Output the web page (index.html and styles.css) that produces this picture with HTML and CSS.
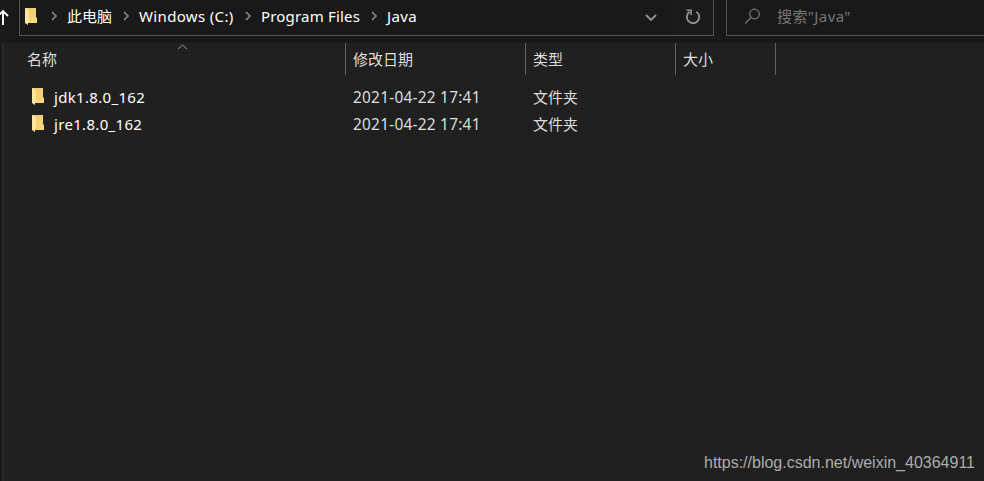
FILE: index.html
```html
<!DOCTYPE html>
<html lang="zh-CN">
<head>
<meta charset="utf-8">
<title>Java</title>
<link rel="stylesheet" href="styles.css">
</head>
<body>
<svg width="0" height="0" class="defs" aria-hidden="true">
  <defs>
    <linearGradient id="gold" x1="0" y1="0" x2="1" y2="1"><stop offset="0" stop-color="#edc868"/><stop offset="1" stop-color="#fbda7c"/></linearGradient>
    <symbol id="folder" viewBox="0 0 13 17"><path d="M0 0h11v9l1 1v5H0z" fill="url(#gold)"/><path d="M0 0l4 2v11l-1 1v3L0 15z" fill="#ffe5a0"/></symbol>
    <symbol id="chevron" viewBox="0 0 6 10"><path d="M1 1l4 4-4 4" fill="none" stroke="#858585" stroke-width="1.7"/></symbol>
  </defs>
</svg>
<header class="toolbar">
  <div class="up"><svg width="9" height="17" viewBox="0 0 9 17"><path d="M3 17V3M-2 8l5-5 5 5" fill="none" stroke="#fff" stroke-width="1.9"/></svg></div>
  <nav class="address">
    <svg class="folder"><use href="#folder"/></svg>
    <svg class="chevron"><use href="#chevron"/></svg><span class="crumb pc">此电脑</span>
    <svg class="chevron"><use href="#chevron"/></svg><span class="crumb drive">Windows (C:)</span>
    <svg class="chevron"><use href="#chevron"/></svg><span class="crumb programs">Program Files</span>
    <svg class="chevron"><use href="#chevron"/></svg><span class="crumb java">Java</span>
    <svg class="drop" width="12" height="8" viewBox="0 0 12 8"><path d="M1 1l5 5 5-5" fill="none" stroke="#919191" stroke-width="1.9"/></svg>
    <div class="refresh"><svg width="16" height="16" viewBox="0 0 16 16"><path d="M11.3 2.7A6.2 6.2 0 1 1 4.5 2.9" fill="none" stroke="#929292" stroke-width="1.9"/><path d="M1.5 1.3h4.6v4.8" fill="none" stroke="#929292" stroke-width="1.6"/></svg></div>
  </nav>
  <div class="search">
    <svg width="17" height="17" viewBox="0 0 17 17"><circle cx="10.5" cy="6" r="4.8" fill="none" stroke="#777" stroke-width="1.2"/><path d="M7 9.5L1 15.6" stroke="#777" stroke-width="1.3"/></svg>
    <span>搜索"Java"</span>
  </div>
</header>
<main class="files">
  <div class="grid head">
    <div class="cell name">名称<svg class="sort" width="11" height="6" viewBox="0 0 11 6"><path d="M1 5l4.5-4L10 5" fill="none" stroke="#999" stroke-width="1"/></svg></div>
    <div class="cell">修改日期</div><div class="cell">类型</div><div class="cell">大小</div>
  </div>
  <div class="grid row">
    <div class="item"><svg class="folder"><use href="#folder"/></svg><span>jdk1.8.0_162</span></div>
    <div class="meta date">2021-04-22 17:41</div><div class="meta">文件夹</div>
  </div>
  <div class="grid row">
    <div class="item"><svg class="folder"><use href="#folder"/></svg><span>jre1.8.0_162</span></div>
    <div class="meta date">2021-04-22 17:41</div><div class="meta">文件夹</div>
  </div>
</main>
<div class="watermark">https://blog.csdn.net/weixin_40364911</div>
</body>
</html>
```
FILE: styles.css
```css
* { box-sizing: border-box; }
body {
  margin: 0;
  height: 481px;
  overflow: hidden;
  background: #191919;
  color: #fff;
  font: 15px/22px "Noto Sans", "Noto Sans CJK SC", sans-serif;
  white-space: nowrap;
}
svg { display: block; flex: none; }
.defs { position: absolute; }
.toolbar { display: flex; height: 43px; }
.up { width: 19px; padding-top: 8px; }
.address {
  display: flex;
  width: 695px;
  height: 36px;
  margin-right: 12px;
  padding-left: 5px;
  border: 1px solid #535353;
  border-top: 0;
}
.folder { width: 13px; height: 17px; }
.address .folder { margin: 8px 13px 0 0; }
.chevron { width: 6px; height: 10px; margin: 11px 10px 0 0; }
.crumb { padding-top: 5px; }
.pc { width: 56px; }
.drive { width: 106px; letter-spacing: .35px; }
.programs { width: 110px; letter-spacing: .18px; }
.java { letter-spacing: .4px; }
.drop { margin: 14px 14px 0 auto; }
.refresh { width: 42px; padding: 9px 0 0 14px; background: #1b1b1b; }
.search {
  display: flex;
  flex: 1;
  height: 36px;
  padding: 5px 0 0 17px;
  border: solid #535353;
  border-width: 0 0 1px 1px;
  color: #777;
}
.search svg { margin: 3px 16px 0 0; }
.search span { letter-spacing: .4px; }
.files {
  height: 438px;
  margin-left: 2px;
  border-left: 2px solid #292929;
  background: #202020;
}
.grid { display: grid; grid-template-columns: 342px 180px 150px 100px; }
.head { height: 32px; margin-bottom: 9px; color: #dedede; }
.cell { padding: 5px 0 0 7px; border-right: 1px solid #636363; }
.name { position: relative; padding-left: 23px; }
.sort { position: absolute; left: 173px; top: 1px; }
.row { height: 27px; line-height: 26px; }
.item { display: flex; padding-left: 28px; }
.item span { margin-left: 9px; letter-spacing: .32px; }
.item .folder { margin-top: 4px; }
.meta { padding-left: 7px; color: #dedede; }
.date { font-size: 15.4px; line-height: 28px; letter-spacing: .25px; }
.watermark {
  position: absolute;
  right: 9px;
  bottom: 7px;
  color: #acacac;
  font: 16px/22px "Liberation Sans", sans-serif;
}
```
